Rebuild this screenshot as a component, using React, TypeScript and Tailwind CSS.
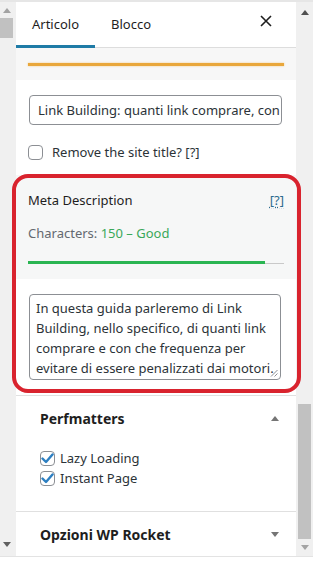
import React from 'react';

const FONT = { fontFamily: '"Noto Sans", "Open Sans", Arial, sans-serif' };

function Arrow({ dir, color }: { dir: 'up' | 'down'; color: string }) {
  return (
    <svg width="8" height="5" viewBox="0 0 8 5">
      {dir === 'up' ? <path d="M0 5 L4 0 L8 5 Z" fill={color} /> : <path d="M0 0 L8 0 L4 5 Z" fill={color} />}
    </svg>
  );
}

function Check({ checked }: { checked?: boolean }) {
  return (
    <span className="w-[15px] h-[15px] rounded-[4px] border border-[#8c8f94] bg-white flex items-center justify-center shrink-0">
      {checked && (
        <svg width="13" height="11" viewBox="0 0 13 11">
          <path d="M1.5 5.5 L5 9 L11.5 1.5" fill="none" stroke="#2d7fc1" strokeWidth="2.4" strokeLinecap="round" strokeLinejoin="round" />
        </svg>
      )}
    </span>
  );
}

const DESC = [
  'In questa guida parleremo di Link',
  'Building, nello specifico, di quanti link',
  'comprare e con che frequenza per',
  'evitare di essere penalizzati dai motori.',
];

export default function App() {
  return (
    <div className="relative w-[313px] h-[581px] bg-white overflow-hidden text-[#1e1e1e]" style={FONT}>
      <div className="h-[2px] bg-[#e6e6e6]" />
      <div className="flex h-[554px]">
        {/* left scrollbar */}
        <div className="w-4 bg-[#f0f0f0] flex flex-col">
          <div className="h-4 flex items-center justify-center pr-[3px]">
            <Arrow dir="up" color="#a3a3a3" />
          </div>
          <div className="h-5 w-[13px] bg-[#c1c1c1]" />
          <div className="flex-1" />
          <div className="h-5 flex items-center justify-center pr-[3px] pb-1">
            <Arrow dir="down" color="#606060" />
          </div>
        </div>

        {/* panel */}
        <div className="flex-1 flex flex-col min-w-0 bg-white">
          <div className="h-[46px] shrink-0 flex items-stretch border-b border-[#dddddd] relative">
            <div className="w-[79px] flex items-center pl-4 text-[13px] relative">
              Articolo
              <div className="absolute left-0 right-0 -bottom-px h-[3px] bg-[#1f7ba6]" />
            </div>
            <div className="flex items-center pl-4 text-[13px]">Blocco</div>
            <div className="flex-1" />
            <div className="w-[44px] flex items-center justify-center pb-2 pr-4">
              <svg width="12" height="12" viewBox="0 0 12 12">
                <path d="M1 1 L11 11 M11 1 L1 11" stroke="#1e1e1e" strokeWidth="1.6" />
              </svg>
            </div>
          </div>

          <div className="h-[32px] shrink-0 bg-[#f7f7f7] flex items-center px-3">
            <div className="h-[3px] w-full bg-[#e9a73b] shadow-[0_0_2px_#f2c77a]" />
          </div>

          <div className="h-[92px] shrink-0 px-[13px] pr-[14px] pt-[15px]">
            <input
              readOnly
              value="Link Building: quanti link comprare, con che frequenza"
              className="block w-full h-[30px] border border-[#8c8f94] rounded-[4px] pl-2 text-[13px] text-[#2c3338] outline-none bg-white"
              style={FONT}
            />
            <div className="flex items-center gap-[9px] mt-[20px] -ml-px h-[15px] text-[13px] leading-[15px] text-[#2c3338]">
              <Check />
              <span>Remove the site title? [?]</span>
            </div>
          </div>

          <div className="bg-[#f6f7f7] px-3 pt-[15px] h-[104px] shrink-0 mt-[3px]">
            <div className="flex items-center justify-between text-[13px] leading-[20px]">
              <span className="text-[#1e1e1e]">Meta Description</span>
              <span className="text-[#2b6b8e] underline underline-offset-2 decoration-dotted">[?]</span>
            </div>
            <div className="mt-[13px] text-[13px] leading-[20px]">
              <span className="text-[#646970]">Characters: </span>
              <span className="text-[#3aa85a]">150 – Good</span>
            </div>
            <div className="mt-[18px] flex items-end h-[3px]">
              <div className="h-[3px] w-[237px] bg-[#2ab552]" />
              <div className="flex-1 h-px bg-[#c9c9c9]" />
            </div>
          </div>

          <div className="px-[13px] pr-[15px] pt-[15px] h-[116px] shrink-0">
            <div className="relative border border-[#8c8f94] rounded-[4px] h-[86px] pl-[6px] pt-[3px] text-[13px] leading-[20px] text-[#2c3338] overflow-hidden">
              {DESC.map((l) => (
                <div key={l} className="whitespace-nowrap">{l}</div>
              ))}
              <svg className="absolute right-[2px] bottom-[2px]" width="8" height="8" viewBox="0 0 8 8">
                <path d="M7.5 1 L1 7.5 M7.5 4.5 L4.5 7.5" stroke="#8c8f94" strokeWidth="1" />
              </svg>
            </div>
          </div>

          <div className="border-t border-[#e0e0e0] shrink-0">
            <div className="h-[44px] flex items-center justify-between pl-6 pr-[17px]">
              <span className="text-[14px] font-bold text-[#1e1e1e]">Perfmatters</span>
              <Arrow dir="up" color="#757575" />
            </div>
            <div className="pl-6 pt-[11px] pb-[25px] flex flex-col gap-[5px] text-[13px] text-[#2c3338]">
              <div className="flex items-center gap-[5px] h-[15px]">
                <Check checked />
                <span>Lazy Loading</span>
              </div>
              <div className="flex items-center gap-[5px] h-[15px]">
                <Check checked />
                <span>Instant Page</span>
              </div>
            </div>
          </div>

          <div className="border-t border-[#e0e0e0] flex-1 flex items-center justify-between pl-6 pr-[17px]">
            <span className="text-[14px] font-bold text-[#1e1e1e]">Opzioni WP Rocket</span>
            <Arrow dir="down" color="#757575" />
          </div>
        </div>

        {/* right scrollbar */}
        <div className="w-[17px] bg-[#f0f0f0] flex flex-col">
          <div className="h-5 flex items-center justify-center">
            <Arrow dir="up" color="#505050" />
          </div>
          <div className="flex-1" />
          <div className="mx-[2px] h-[135px] bg-[#c1c1c1]" />
          <div className="h-[17px] flex items-center justify-center">
            <Arrow dir="down" color="#a3a3a3" />
          </div>
        </div>
      </div>
      <div className="h-px bg-[#e3e3e3]" />

      {/* annotation */}
      <div className="absolute left-[12px] top-[174px] w-[289px] h-[219px] border-[4px] border-[#d9232e] rounded-[16px] pointer-events-none" />
    </div>
  );
}
